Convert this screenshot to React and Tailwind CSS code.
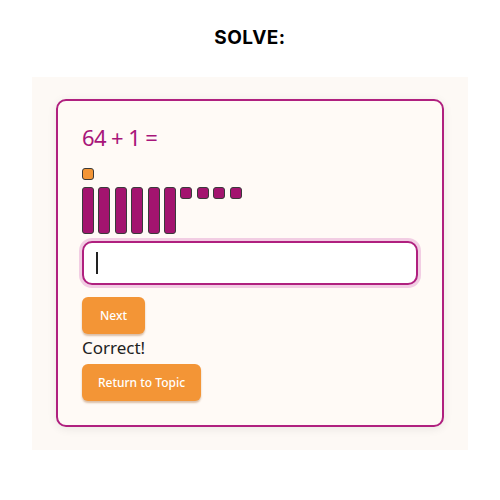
import React from "react";

const Bar = () => (
  <div className="w-[12px] h-[47px] rounded-[3px] border-[1.5px] border-[#3a3a3a] bg-[#a3146f]" />
);
const Unit = ({ orange }) => (
  <div
    className={
      "w-[12px] h-[12px] rounded-[3px] border-[1.5px] border-[#3a3a3a] " +
      (orange ? "bg-[#f39536]" : "bg-[#a3146f]")
    }
  />
);

export default function App() {
  return (
    <div className="w-[500px] min-h-[500px] bg-white font-['Noto_Sans',sans-serif]">
      <h1 className="pt-[24px] text-center text-[19px] leading-[27px] font-bold text-black font-['Inter',sans-serif] tracking-[0.5px]">
        SOLVE:
      </h1>
      <div className="mx-[32px] mt-[26px] bg-[#fdf9f5] px-[24px] pt-[22px] pb-[23px]">
        <div className="rounded-[10px] border-2 border-[#b0207f] bg-[#fffaf6] px-[24px] pt-[21px] pb-[24px] shadow-[0_2px_10px_rgba(0,0,0,0.08)]">
          <div className="text-[22px] leading-[30px] text-[#a8157a] tracking-[-0.6px]">64 + 1 =</div>
          <div className="mt-[16px] flex">
            <Unit orange />
          </div>
          <div className="mt-[7px] flex items-start gap-[4.4px]">
            <Bar />
            <Bar />
            <Bar />
            <Bar />
            <Bar />
            <Bar />
            <Unit />
            <Unit />
            <Unit />
            <Unit />
          </div>
          <div className="mt-[7px] flex h-[44px] items-center rounded-[10px] border-2 border-[#b0207f] bg-white px-[12px] shadow-[0_0_0_3px_#f2cde3]">
            <div className="h-[22px] w-[1.5px] bg-[#222]" />
          </div>
          <button className="mt-[12px] block h-[37px] w-[63px] rounded-[6px] bg-[#f39536] text-[12px] font-medium text-white shadow-[0_2px_2px_rgba(150,80,20,0.35)]">
            Next
          </button>
          <div className="mt-[1px] text-[17px] leading-[26px] text-[#222]">Correct!</div>
          <button className="mt-[3px] block h-[37px] w-[119px] rounded-[6px] bg-[#f39536] text-[12px] font-medium text-white shadow-[0_2px_2px_rgba(150,80,20,0.35)]">
            Return to Topic
          </button>
        </div>
      </div>
    </div>
  );
}
